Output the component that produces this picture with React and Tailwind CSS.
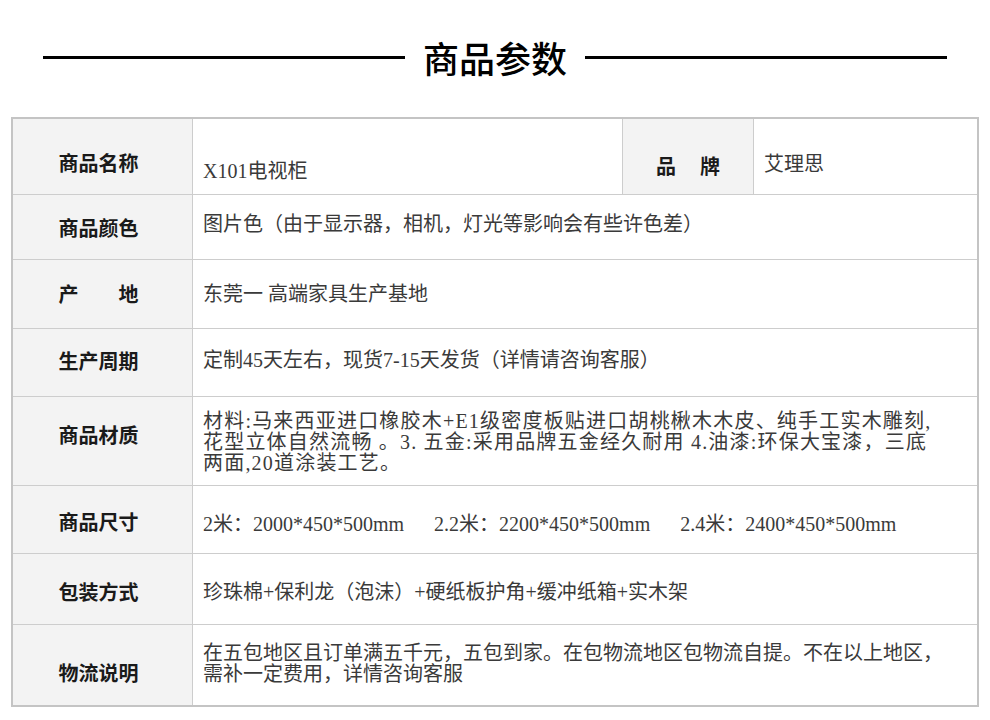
import { Fragment } from "react";

const serif = "font-['Liberation_Serif','Noto_Sans_CJK_SC',serif]";
const sans = "font-['Noto_Sans_CJK_SC',sans-serif]";

const rows = [
    {
        label: "商品颜色",
        height: "h-[65px]",
        labelClass: "pt-[1px]",
        valueClass: "pb-[6px]",
        value: "图片色（由于显示器，相机，灯光等影响会有些许色差）",
    },
    {
        label: "产\u3000\u3000地",
        height: "h-[69px]",
        labelClass: "",
        valueClass: "",
        value: "东莞一 高端家具生产基地",
    },
    {
        label: "生产周期",
        height: "h-[68px]",
        labelClass: "pb-[3px]",
        valueClass: "pb-[5px]",
        value: "定制45天左右，现货7-15天发货（详情请咨询客服）",
    },
    {
        label: "商品材质",
        height: "h-[89px]",
        labelClass: "pb-[12px]",
        valueClass: "pt-[3px] leading-[21px] tracking-[1.2px]",
        value: [
            "材料:马来西亚进口橡胶木+E1级密度板贴进口胡桃楸木木皮、纯手工实木雕刻,",
            "花型立体自然流畅 。3. 五金:采用品牌五金经久耐用 4.油漆:环保大宝漆，三底",
            "两面,20道涂装工艺。",
        ],
    },
    {
        label: "商品尺寸",
        height: "h-[68px]",
        labelClass: "pt-[4px]",
        valueClass: "pt-[8px] whitespace-pre",
        value: "2米：2000*450*500mm      2.2米：2200*450*500mm      2.4米：2400*450*500mm",
    },
    {
        label: "包装方式",
        height: "h-[71px]",
        labelClass: "pt-[6px]",
        valueClass: "pt-[6px]",
        value: "珍珠棉+保利龙（泡沫）+硬纸板护角+缓冲纸箱+实木架",
    },
    {
        label: "物流说明",
        height: "h-[80px]",
        labelClass: "pt-[16px]",
        valueClass: "pb-[3px] leading-[21px]",
        value: [
            "在五包地区且订单满五千元，五包到家。在包物流地区包物流自提。不在以上地区，",
            "需补一定费用，详情咨询客服",
        ],
        last: true,
    },
];

function LabelCell({ children, className = "" }) {
    return (
        <div
            className={`w-[180px] shrink-0 border-r border-[#cdcdcd] bg-[#f3f3f3] flex items-center justify-center pr-[8px] text-[20px] font-bold text-[#1a1a1a] ${sans} ${className}`}
        >
            {children}
        </div>
    );
}

function ValueCell({ value, className = "" }) {
    const lines = Array.isArray(value) ? value : [value];
    return (
        <div
            className={`flex-1 flex items-center pl-[10px] text-[20px] text-[#3a3a3a] ${serif} ${className}`}
        >
            <div>
                {lines.map((line, i) => (
                    <Fragment key={i}>
                        {line}
                        {i < lines.length - 1 && <br />}
                    </Fragment>
                ))}
            </div>
        </div>
    );
}

export default function App() {
    return (
        <div className="w-[990px] h-[720px] bg-white overflow-hidden">
            <div className="h-[114px] px-[43px] flex items-center gap-[18px]">
                <div className="flex-1 h-[3px] bg-black"></div>
                <div className={`text-[36px] leading-[40px] font-medium text-black ${sans}`}>
                    商品参数
                </div>
                <div className="flex-1 h-[3px] bg-black"></div>
            </div>
            <div className="mt-[3px] mx-[11px] w-[968px] border-2 border-[#c4c4c4]">
                <div className="h-[76px] flex border-b border-[#cdcdcd]">
                    <LabelCell className="pt-[12px]">商品名称</LabelCell>
                    <div
                        className={`w-[430px] shrink-0 border-r border-[#cdcdcd] flex items-center pl-[10px] pt-[28px] text-[20px] text-[#3a3a3a] ${serif}`}
                    >
                        X101电视柜
                    </div>
                    <div
                        className={`w-[131px] shrink-0 border-r border-[#cdcdcd] bg-[#f3f3f3] flex items-center justify-center gap-[24px] pt-[18px] text-[20px] font-bold text-[#1a1a1a] ${sans}`}
                    >
                        <span>品</span>
                        <span>牌</span>
                    </div>
                    <div
                        className={`flex-1 flex items-center pl-[10px] pt-[14px] text-[20px] text-[#3a3a3a] ${serif}`}
                    >
                        艾理思
                    </div>
                </div>
                {rows.map((row) => (
                    <div
                        key={row.label}
                        className={`${row.height} flex ${row.last ? "" : "border-b border-[#cdcdcd]"}`}
                    >
                        <LabelCell className={row.labelClass}>{row.label}</LabelCell>
                        <ValueCell value={row.value} className={row.valueClass} />
                    </div>
                ))}
            </div>
        </div>
    );
}
